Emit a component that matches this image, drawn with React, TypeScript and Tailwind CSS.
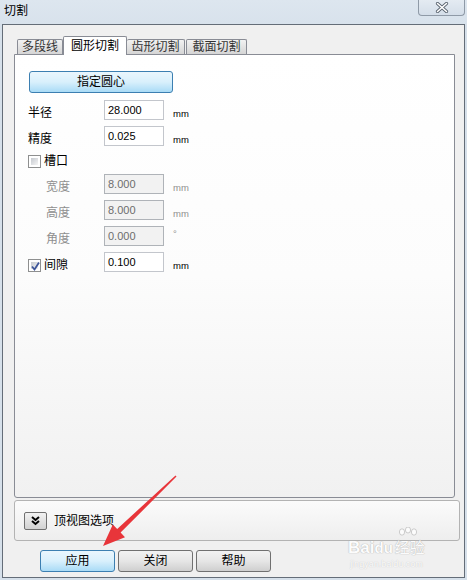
import React from 'react';

const Check: React.FC<{ checked?: boolean }> = ({ checked }) => (
  <div className="relative w-[13px] h-[13px] border border-[#8e8f8f] bg-white p-[2px]">
    <div className="w-full h-full bg-gradient-to-br from-[#c5c9cf] to-[#f5f5f5]"></div>
    {checked && (
      <svg className="absolute left-[1px] top-[1px]" width="11" height="11" viewBox="0 0 11 11">
        <path d="M2 5.5 L4.5 8.5 L9 1.5" fill="none" stroke="#3d5599" strokeWidth="1.8" />
      </svg>
    )}
  </div>
);

const Field: React.FC<{
  label: string;
  value: string;
  unit: string;
  disabled?: boolean;
  check?: 'on' | 'off';
}> = ({ label, value, unit, disabled, check }) => (
  <div className="flex items-start h-[20px]">
    <div className={`w-[76px] flex items-center ${disabled ? 'pl-[18px] pt-[5px]' : 'pt-[5px]'}`}>
      {check && (
        <div className="mr-[3px] mt-[1px]">
          <Check checked={check === 'on'} />
        </div>
      )}
      <span className={`text-[12px] leading-[16px] ${disabled ? 'text-[#8f8f8f]' : 'text-black'}`}>{label}</span>
    </div>
    <div
      className={`w-[60px] h-[20px] border pl-[3px] flex items-center text-[11px] font-['Liberation_Sans',sans-serif] ${
        disabled
          ? 'bg-[#f2f2f2] border-[#afb3b8] text-[#6d6d6d]'
          : 'bg-white border-[#c3c6cc] text-black'
      }`}
    >
      {value}
    </div>
    <span
      className={`ml-[9px] text-[9.5px] font-['Liberation_Sans',sans-serif] ${
        unit === '°' ? 'pt-[2px]' : 'pt-[8px]'
      } leading-[12px] ${disabled ? 'text-[#8f8f8f]' : 'text-black'}`}
    >
      {unit}
    </span>
  </div>
);

const WinButton: React.FC<{ label: string; primary?: boolean }> = ({ label, primary }) => (
  <div
    className={`w-[75px] h-[22px] rounded-[3px] border flex items-center justify-center text-[12px] text-black ${
      primary
        ? 'border-[#3c7fb1] bg-gradient-to-b from-[#eaf6fd] via-[#d9f0fc] to-[#a9dbf6]'
        : 'border-[#707070] bg-gradient-to-b from-[#f2f2f2] via-[#e6e6e6] to-[#cfcfcf]'
    }`}
  >
    {label}
  </div>
);

export default function App() {
  return (
    <div className="relative w-[467px] h-[580px] overflow-hidden bg-[#d6e0ea] flex flex-col font-['Liberation_Sans','Noto_Sans_CJK_SC',sans-serif]">
      {/* title bar */}
      <div className="h-[24px] flex items-start bg-gradient-to-b from-[#dde6ef] to-[#d8e2ec]">
        <span className="ml-[4px] mt-[3px] text-[12px] leading-[16px] text-black">切割</span>
        <div className="ml-auto mr-[2px] w-[47px] h-[16px] border border-t-0 border-[#8f9aa7] rounded-b-[4px] bg-gradient-to-b from-[#e4ebf2] to-[#d4dee9] flex items-center justify-center">
          <svg width="14" height="11" viewBox="0 0 14 11">
            <path d="M2.5 1.5 L11.5 9.5 M11.5 1.5 L2.5 9.5" stroke="#56606c" strokeWidth="3.2" strokeLinecap="round" />
            <path d="M2.5 1.5 L11.5 9.5 M11.5 1.5 L2.5 9.5" stroke="#ffffff" strokeWidth="1.6" strokeLinecap="round" />
          </svg>
        </div>
      </div>

      {/* client area */}
      <div className="mx-[2px] mb-[2px] flex-1 border border-[#646d78] bg-[#f0f0f0] flex flex-col">
        {/* tabs */}
        <div className="mt-[11px] ml-[14px] h-[18px] flex items-end text-[12px]">
          <div className="w-[46px] h-[15px] border border-b-0 border-[#898c95] rounded-t-[2px] bg-gradient-to-b from-[#f2f2f2] to-[#d5d5d5] flex items-center justify-center text-[#333]">
            多段线
          </div>
          <div className="relative z-10 w-[64px] h-[19px] -mb-px border border-b-0 border-[#898c95] rounded-t-[2px] bg-white flex items-center justify-center text-black">
            圆形切割
          </div>
          <div className="w-[58px] h-[15px] border border-b-0 border-l-0 border-[#898c95] rounded-t-[2px] bg-gradient-to-b from-[#f2f2f2] to-[#d5d5d5] flex items-center justify-center text-[#333]">
            齿形切割
          </div>
          <div className="w-[61px] h-[15px] ml-px border border-b-0 border-[#898c95] rounded-t-[2px] bg-gradient-to-b from-[#f2f2f2] to-[#d5d5d5] flex items-center justify-center text-[#333]">
            截面切割
          </div>
        </div>

        {/* tab panel */}
        <div className="ml-[11px] w-[441px] h-[444px] border border-[#898c95] rounded-b-[3px] bg-gradient-to-b from-white via-[#fcfcfc] to-[#f1f1f1] pl-[13px] pt-[16px]">
          <div className="ml-px w-[144px] h-[22px] rounded-[3px] border border-[#3c7fb1] bg-gradient-to-b from-[#eaf6fd] via-[#d9f0fc] to-[#a9dbf6] flex items-center justify-center text-[12px] text-black">
            指定圆心
          </div>
          <div className="mt-[7px]">
            <Field label="半径" value="28.000" unit="mm" />
          </div>
          <div className="mt-[6px]">
            <Field label="精度" value="0.025" unit="mm" />
          </div>
          <div className="mt-[5px] h-[20px] flex items-center">
            <div className="mr-[3px]">
              <Check />
            </div>
            <span className="text-[12px] leading-[16px] text-black">槽口</span>
          </div>
          <div className="mt-[3px]">
            <Field label="宽度" value="8.000" unit="mm" disabled />
          </div>
          <div className="mt-[6px]">
            <Field label="高度" value="8.000" unit="mm" disabled />
          </div>
          <div className="mt-[6px]">
            <Field label="角度" value="0.000" unit="°" disabled />
          </div>
          <div className="mt-[6px]">
            <Field label="间隙" value="0.100" unit="mm" check="on" />
          </div>
        </div>

        {/* top view options group */}
        <div className="mt-[2px] ml-[11px] w-[446px] h-[41px] border border-[#b3b3b3] rounded-[3px] bg-gradient-to-b from-[#fbfbfb] to-[#eeeeee] flex items-center pl-[9px]">
          <div className="w-[23px] h-[18px] rounded-[2px] border border-[#707070] bg-gradient-to-b from-[#f2f2f2] to-[#d2d2d2] flex items-center justify-center">
            <svg width="9" height="10" viewBox="0 0 9 10">
              <path d="M1 1 L4.5 4 L8 1 M1 5 L4.5 8 L8 5" fill="none" stroke="#000" strokeWidth="2" />
            </svg>
          </div>
          <span className="ml-[7px] text-[12px] text-black">顶视图选项</span>
        </div>

        {/* buttons */}
        <div className="mt-[9px] ml-[37px] flex gap-[3px]">
          <WinButton label="应用" primary />
          <WinButton label="关闭" />
          <WinButton label="帮助" />
        </div>
      </div>

      {/* Baidu watermark */}
      <div className="absolute left-[348px] top-[527px] flex flex-col items-center pointer-events-none opacity-80">
        <svg className="absolute left-[48px] top-0" width="26" height="18" viewBox="0 0 26 18">
          <g fill="#ffffff" stroke="#b5b5b5" strokeWidth="0.8">
            <ellipse cx="6" cy="5" rx="2.6" ry="3.2" />
            <ellipse cx="12" cy="3" rx="2.6" ry="3" />
            <ellipse cx="18" cy="5" rx="2.6" ry="3.2" />
          </g>
        </svg>
        <div className="mt-[12px] flex items-end text-[17px] font-bold leading-[18px] text-white [text-shadow:0_0_1px_#a8a8a8,0_0_1px_#a8a8a8]">
          <span>Bai</span>
          <span className="text-[15px]">du</span>
          <span className="ml-[2px] text-[15px] font-normal">经验</span>
        </div>
        <div className="mt-[2px] text-[9px] leading-[10px] text-white [text-shadow:0_0_1px_#b0b0b0]">jingyan.baidu.com</div>
      </div>

      {/* red arrow annotation */}
      <svg className="absolute left-0 top-0 pointer-events-none" width="467" height="580" viewBox="0 0 467 580">
        <polygon
          points="175.5,475.4 117.2,529.0 112.8,524.4 103,546 125,537.2 120.6,532.6 176.5,476.6"
          fill="#e8353a"
        />
      </svg>
    </div>
  );
}
